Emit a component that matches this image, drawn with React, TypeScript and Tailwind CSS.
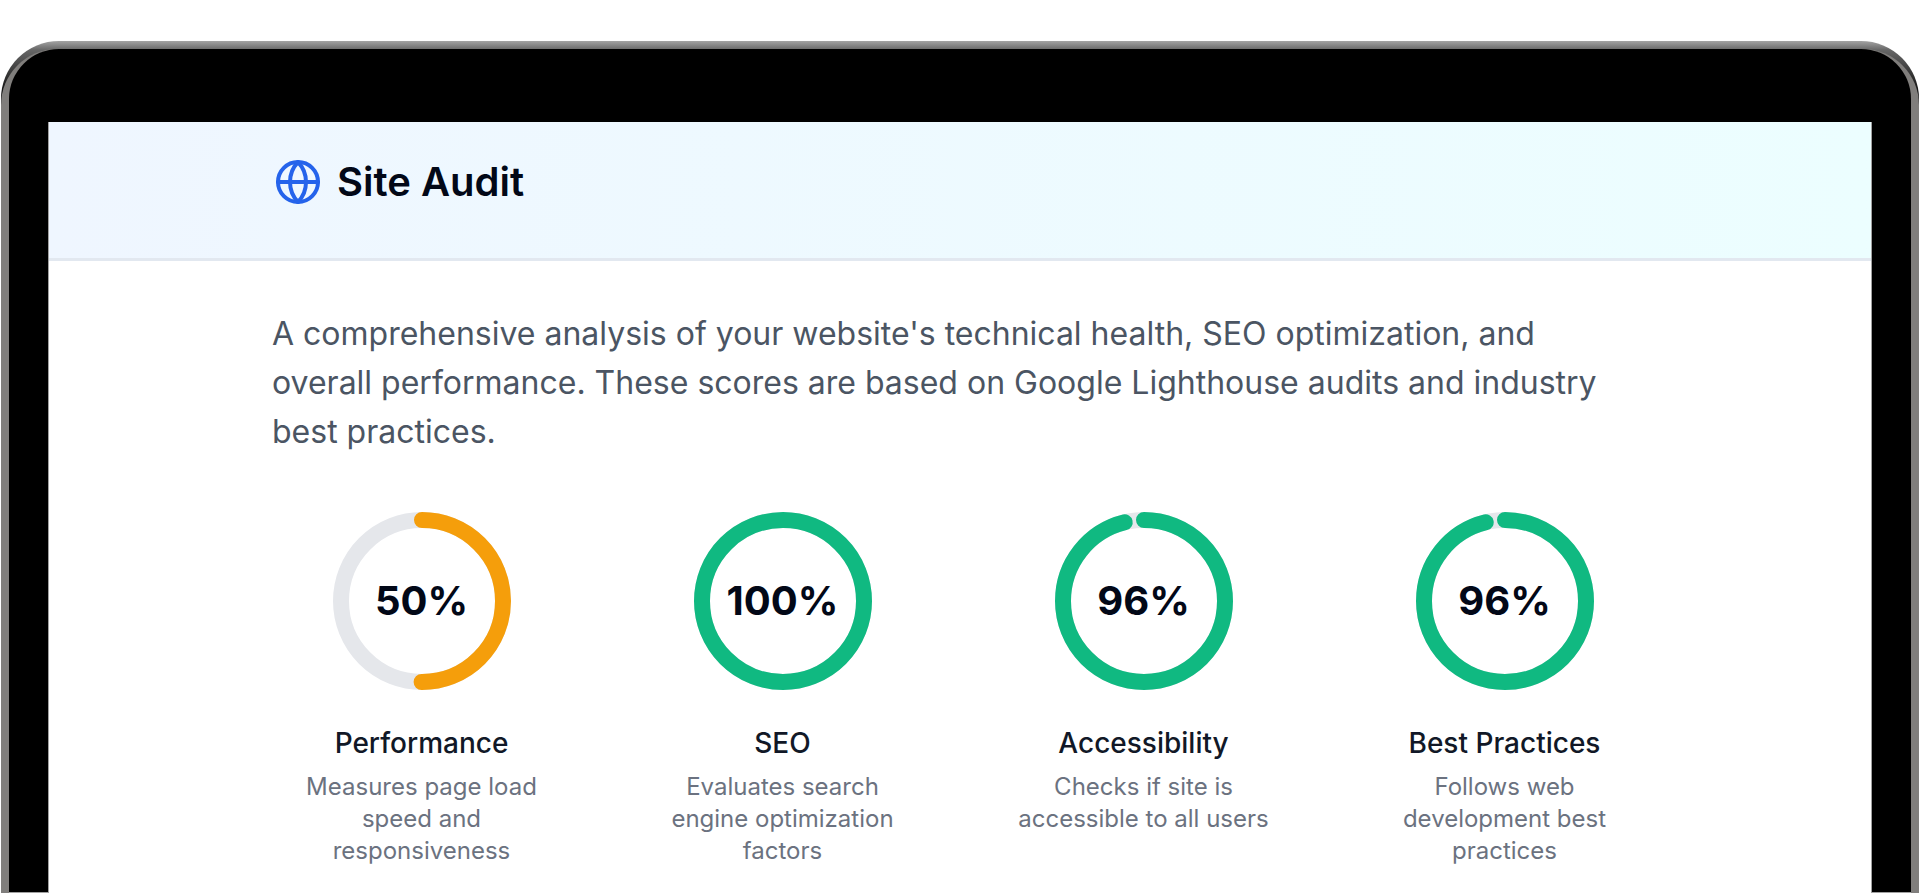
import { Globe } from "lucide-react";

type Score = { label: string; value: number; stroke: string; description: string };

const scores: Score[] = [
  { label: "Performance", value: 50, stroke: "#f59e0b", description: "Measures page load speed and responsiveness" },
  { label: "SEO", value: 100, stroke: "#10b981", description: "Evaluates search engine optimization factors" },
  { label: "Accessibility", value: 96, stroke: "#10b981", description: "Checks if site is accessible to all users" },
  { label: "Best Practices", value: 96, stroke: "#10b981", description: "Follows web development best practices" },
];

const RADIUS = 81;
const CIRCUMFERENCE = 2 * Math.PI * RADIUS;

function ScoreRing({ value, stroke }: { value: number; stroke: string }) {
  return (
    <div className="grid place-items-center">
      <svg viewBox="0 0 178 178" className="col-start-1 row-start-1 size-[178px] -rotate-90" aria-hidden="true">
        <circle cx="89" cy="89" r={RADIUS} fill="none" stroke="#e5e7eb" strokeWidth="16" />
        <circle
          cx="89"
          cy="89"
          r={RADIUS}
          fill="none"
          stroke={stroke}
          strokeWidth="16"
          strokeLinecap="round"
          strokeDasharray={CIRCUMFERENCE}
          strokeDashoffset={CIRCUMFERENCE * (1 - value / 100)}
        />
      </svg>
      <span className="col-start-1 row-start-1 text-[40px] leading-none font-bold text-[#020817]">{value}%</span>
    </div>
  );
}

function ScoreCard({ score }: { score: Score }) {
  return (
    <li className="flex flex-col items-center px-4 text-center">
      <ScoreRing value={score.value} stroke={score.stroke} />
      <h2 className="mt-[33px] text-[28px] leading-10 font-medium text-[#111827]">{score.label}</h2>
      <p className="mt-2 text-2xl leading-8 text-[#6b7280]">{score.description}</p>
    </li>
  );
}

export default function App() {
  return (
    <div className="flex min-h-screen flex-col bg-white px-px pt-[41px] font-['Inter',sans-serif]">
      <div className="flex grow flex-col rounded-t-[58px] bg-[linear-gradient(#a3a3a3_0px,#666666_9px,#0a0a0a_54px)] pt-2">
        <div className="flex grow flex-col rounded-t-[56px] bg-[#807e7c] px-2">
          <div className="flex grow flex-col rounded-t-[50px] border-b border-neutral-400 bg-black px-[39px] pt-[73px]">
            <main className="-mb-px grow border-x border-neutral-400 bg-white">
              <header className="border-b-3 border-slate-200 bg-linear-to-r from-[#eff6ff] to-[#ecfeff] px-[225px] pt-9 pb-[52px]">
                <div className="flex items-center gap-[15px]">
                  <Globe className="size-12 text-[#2563eb]" strokeWidth={2} aria-hidden="true" />
                  <h1 className="text-[40px] leading-12 font-semibold text-[#020817]">Site Audit</h1>
                </div>
              </header>
              <section className="pt-12 pr-[216px] pb-4 pl-[222px]">
                <p className="pr-8 pl-px text-[32px] leading-[49px] text-[#4b5563]">
                  A comprehensive analysis of your website's technical health, SEO optimization, and overall
                  performance. These scores are based on Google Lighthouse audits and industry best practices.
                </p>
                <ul className="mt-14 grid grid-cols-4 gap-[60px]">
                  {scores.map((score) => (
                    <ScoreCard key={score.label} score={score} />
                  ))}
                </ul>
              </section>
            </main>
          </div>
        </div>
      </div>
    </div>
  );
}
